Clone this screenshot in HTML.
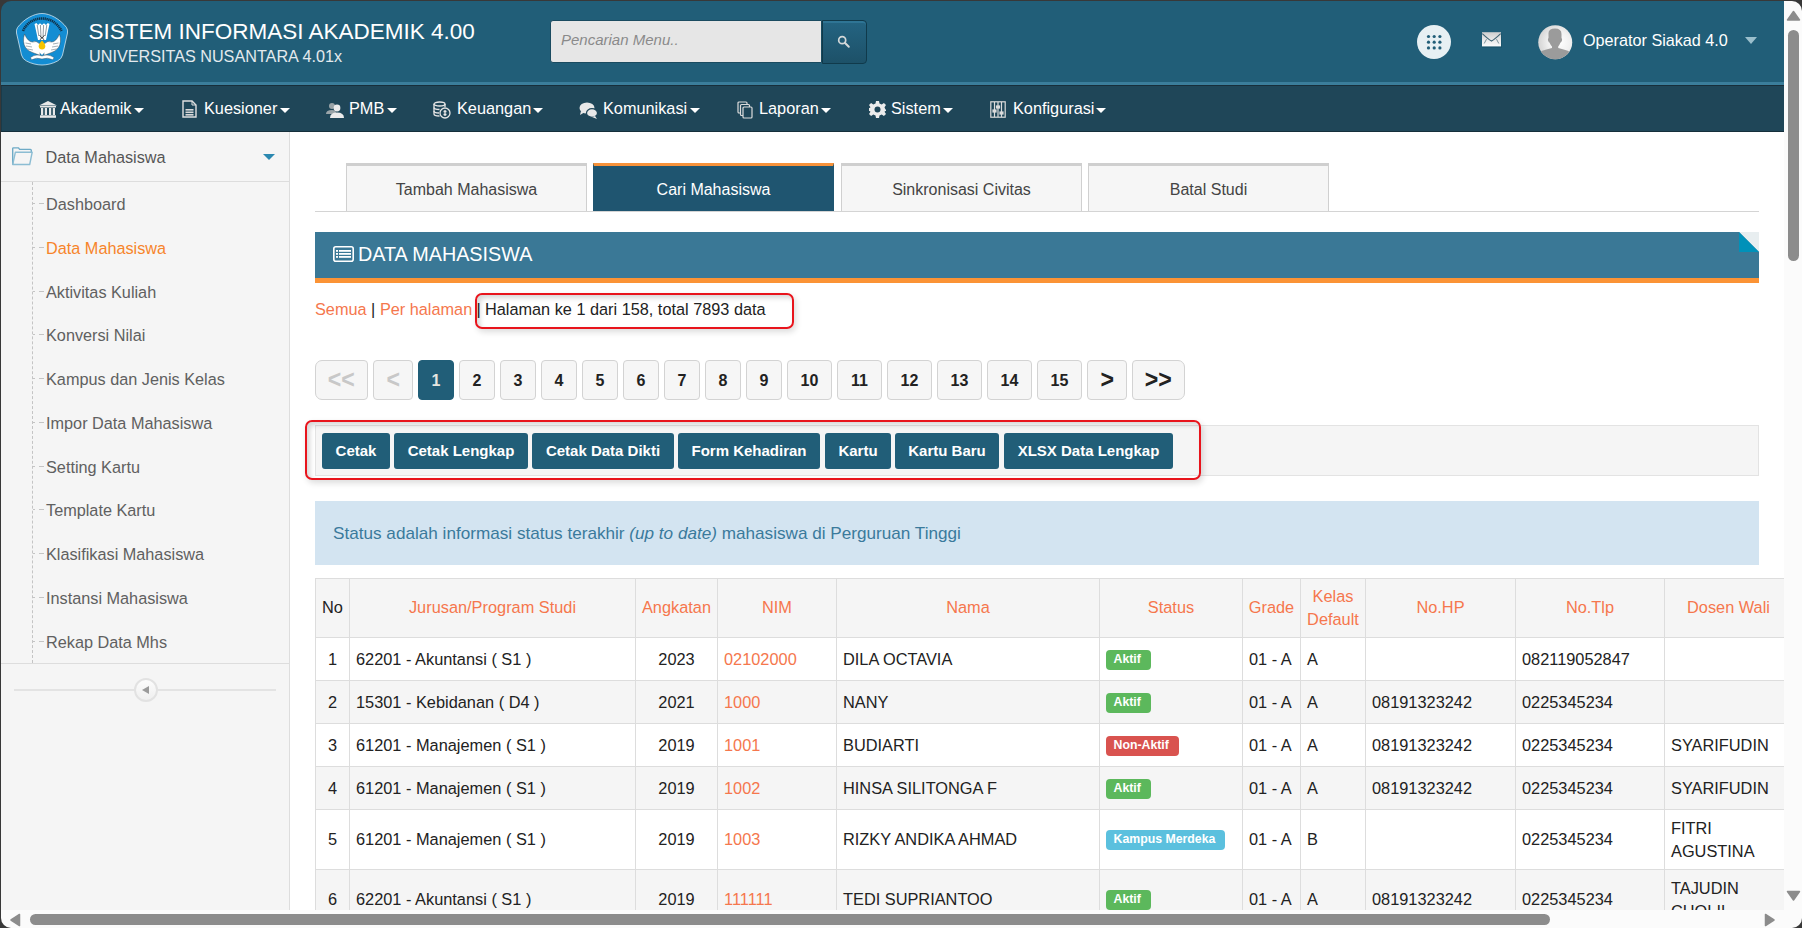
<!DOCTYPE html>
<html><head><meta charset="utf-8">
<style>
*{box-sizing:border-box;margin:0;padding:0}
html,body{width:1802px;height:928px;overflow:hidden;background:#3a3a3a;font-family:"Liberation Sans",sans-serif;}
.a{position:absolute}
#win{position:absolute;left:0;top:0;width:1802px;height:928px;background:#fff;overflow:hidden}
#hdr{position:absolute;left:0;top:0;width:1784px;height:82px;background:#215e78}
#stripe{position:absolute;left:0;top:82px;width:1784px;height:3px;background:#3b7e9b}
#nav{position:absolute;left:0;top:85px;width:1784px;height:47px;background:#1f4658;border-top:1px solid #182f3b;border-bottom:1px solid #152f3b;border-left:2px solid #1a3b4a}
.title{position:absolute;left:88.5px;top:19px;font-size:22.5px;color:#fff;white-space:nowrap;line-height:26px}
.sub{position:absolute;left:89px;top:46px;font-size:16.2px;color:#e3eaee;white-space:nowrap;line-height:20px}
.navi{position:absolute;top:99px;height:20px;font-size:16.3px;color:#fff;line-height:19px;white-space:nowrap}
.caret{position:absolute;width:0;height:0;border-left:5px solid transparent;border-right:5px solid transparent;border-top:5px solid #fff}
#side{position:absolute;left:0;top:132px;width:290px;height:796px;background:#f5f5f5;border-right:1px solid #ddd}
.sitem{position:absolute;left:46px;font-size:16.25px;color:#606060;line-height:19px;white-space:nowrap}
.sdash{position:absolute;left:32px;width:11px;height:1px;border-top:1px dashed #bbb}
.tab{position:absolute;top:163px;height:48px;background:#f6f6f6;border:1px solid #d0d0d0;border-top:3px solid #cfcfcf;border-bottom:none;font-size:16px;color:#444;text-align:center;line-height:48px}
.pg{position:absolute;top:360px;height:40px;background:#f6f6f6;border:1px solid #d3d3d3;border-radius:4px;font-size:16px;font-weight:bold;color:#222;text-align:center;line-height:40px}
.btn{position:absolute;top:433px;height:36px;background:#215e78;border-radius:3px;font-size:15px;font-weight:bold;color:#fff;text-align:center;line-height:36px;white-space:nowrap}
table{border-collapse:collapse;position:absolute;left:314px;top:577px;table-layout:fixed;font-size:16px;color:#222}
td,th{border:1px solid #ddd;padding:0 6px;line-height:23px;vertical-align:middle}
th{font-weight:normal;color:#f5774d;text-align:center;background:#f5f5f5;height:59px}
td{height:43px}
tr.s td{background:#f5f5f5}
.td{position:absolute;font-size:16.35px;line-height:23px;white-space:nowrap}
.lbl{position:absolute;font-size:12.3px;font-weight:bold;color:#fff;border-radius:4px;line-height:19px;height:20px;padding:0 10px 0 7.5px;white-space:nowrap}
.ok{background:#5cb85c}.no{background:#d9534f}.in{background:#5bc0de}
.or{color:#f5774d}
</style></head><body>
<div id="win">
  <div id="hdr"></div>
  <div id="stripe"></div>
  <div id="nav"></div>
  <!-- logo -->
  <svg class="a" style="left:0;top:0" width="80" height="80" viewBox="0 0 80 80">
    <path d="M42 13.5 C50 13.5 60 19 66.5 27.5 Q68 30 67.5 33 L62.5 55 Q61.5 59 57.5 61 C53 63.5 47 65 42 65 C37 65 31 63.5 26.5 61 Q22.5 59 21.5 55 L16.5 33 Q16 30 17.5 27.5 C24 19 34 13.5 42 13.5Z" fill="#138dd3" stroke="#cfe4f0" stroke-width="0.8"/>
    <path d="M23 31 C27 22 35 18.5 42 18.5 C49 18.5 57 22 61.5 31" fill="none" stroke="#123248" stroke-width="2.6" stroke-dasharray="1.3 0.6"/>
    <path d="M34.5 24 L36.5 23 L38 25 L40 23.2 L42 25 L44 23.2 L46 25 L47.8 23 L49.5 24 L47.5 33 L46 40 L38 40 L36.5 33Z" fill="#fff"/>
    <path d="M37.2 25 L38.8 36 M40.4 25 L41 37 M43.6 25 L43 37 M46.8 25 L45.2 36" stroke="#4a5a66" stroke-width="0.6"/>
    <path d="M39.5 35 L42 38.5 L44.5 35 M40 40 L42 37 L44 40" fill="none" stroke="#222" stroke-width="0.7"/>
    <path d="M24.5 34 Q22 42 25.5 47.5 Q29 52 35 53.5 Q38 54.5 40 55.5 L40 44 Q36 40 32.5 42 Q28 42 24.5 34Z" fill="#fff" stroke="#3b4a55" stroke-width="0.5"/>
    <path d="M59.5 34 Q62 42 58.5 47.5 Q55 52 49 53.5 Q46 54.5 44 55.5 L44 44 Q48 40 51.5 42 Q56 42 59.5 34Z" fill="#fff" stroke="#3b4a55" stroke-width="0.5"/>
    <path d="M25.5 43 L31 44 M26 46 L32 47 M27.5 49 L33 50 M58.5 43 L53 44 M58 46 L52 47 M56.5 49 L51 50" stroke="#6c7a84" stroke-width="0.6"/>
    <path d="M38 45 Q42 41 46 45 L45 52 L42 55 L39 52Z" fill="#fff"/>
    <path d="M42 40.5 Q45.5 44 45.3 46.5 Q45 49.5 42 49.5 Q39 49.5 38.7 46.5 Q38.5 44 42 40.5Z" fill="#f5c400"/>
    <path d="M30.5 57.5 Q36 53.5 42 56 Q48 53.5 54 57.5 L53 59.8 Q47.5 57 42 59 Q36.5 57 31.5 59.8Z" fill="#fff" stroke="#3b4a55" stroke-width="0.4"/>
  </svg>
  <div class="title">SISTEM INFORMASI AKADEMIK 4.00</div>
  <div class="sub">UNIVERSITAS NUSANTARA 4.01x</div>
  <!-- search -->
  <div class="a" style="left:550px;top:20px;width:272px;height:43px;background:#e6e6e6;border:1px solid #1a4b60;border-radius:3px 0 0 3px"></div>
  <div class="a" style="left:561px;top:31px;font-size:15px;font-style:italic;color:#8a8a8a;line-height:18px">Pencarian Menu..</div>
  <div class="a" style="left:822px;top:20px;width:45px;height:44px;background:linear-gradient(#246482,#1d5168);border:1px solid #103a4b;border-radius:0 4px 4px 0;box-shadow:inset 0 2px 0 rgba(70,150,185,0.35)"></div>
  <svg class="a" style="left:837px;top:35px" width="14" height="14" viewBox="0 0 14 14"><circle cx="5.2" cy="5.2" r="3.5" fill="none" stroke="#d4d8d9" stroke-width="1.7"/><path d="M7.8 7.8 L11.8 11.8" stroke="#d4d8d9" stroke-width="2" stroke-linecap="round"/></svg>
  <!-- right header -->
  <div class="a" style="left:1417px;top:25px;width:34px;height:34px;border-radius:50%;background:#e7f0f3"></div>
  <svg class="a" style="left:1417px;top:25px" width="34" height="34" viewBox="0 0 34 34" fill="#215e78">
    <circle cx="11.5" cy="11.5" r="1.6"/><circle cx="17.2" cy="11.5" r="1.6"/><circle cx="22.9" cy="11.5" r="1.6"/>
    <circle cx="11.5" cy="17.2" r="1.6"/><circle cx="17.2" cy="17.2" r="1.6"/><circle cx="22.9" cy="17.2" r="1.6"/>
    <circle cx="11.5" cy="22.9" r="1.6"/><circle cx="17.2" cy="22.9" r="1.6"/><circle cx="22.9" cy="22.9" r="1.6"/>
  </svg>
  <svg class="a" style="left:1481px;top:31px" width="22" height="18" viewBox="0 0 22 18">
    <defs><linearGradient id="mg" x1="0" y1="0" x2="0" y2="1"><stop offset="0" stop-color="#cfcfcf"/><stop offset="0.6" stop-color="#ececec"/><stop offset="1" stop-color="#fbfbfb"/></linearGradient></defs>
    <rect x="1" y="2.5" width="20" height="14.5" fill="#174d63" opacity="0.5"/>
    <rect x="1" y="1.2" width="19" height="14.2" fill="url(#mg)"/>
    <path d="M1.3 2.6 Q7 8 10.5 10 Q14 8 19.7 2.6" fill="none" stroke="#3f6373" stroke-width="1.1"/>
    <path d="M3.2 12.5 L5.5 8.2 M17.8 12.5 L15.5 8.2" fill="none" stroke="#6e8791" stroke-width="0.9"/>
  </svg>
  <svg class="a" style="left:1537.5px;top:24.5px" width="35" height="35" viewBox="0 0 35 35">
    <defs><radialGradient id="ag" cx="0.62" cy="0.5" r="0.6"><stop offset="0" stop-color="#ffffff"/><stop offset="0.55" stop-color="#f0f0f0"/><stop offset="1" stop-color="#d6d6d6"/></radialGradient>
    <clipPath id="ac"><circle cx="17.25" cy="17.25" r="17"/></clipPath></defs>
    <circle cx="17.25" cy="17.25" r="17" fill="url(#ag)"/>
    <g clip-path="url(#ac)" fill="#9b9b9b">
      <path d="M10.5 9 Q10 3.5 17 3.5 Q23.5 3.5 23.5 9 L23.5 13 Q24.5 14 23.8 16 Q23 17.5 22.5 17.5 Q21.5 20 20.2 21.5 L20.2 23 Q26 24.5 30.5 26 L36 36 L-2 36 L3.5 26 Q8 24.5 14 23 L14 21.5 Q12.5 20 11.5 17.5 Q11 17.5 10.2 16 Q9.5 14 10.5 13Z"/>
    </g>
  </svg>
  <div class="a" style="left:1583px;top:31px;font-size:16.2px;color:#fff;line-height:19px;white-space:nowrap">Operator Siakad 4.0</div>
  <div class="caret" style="left:1745px;top:37px;border-left-width:6px;border-right-width:6px;border-top:7px solid #9bbfcc"></div>


  <!-- NAV items -->
  <svg class="a" style="left:39px;top:101px" width="18" height="17" viewBox="0 0 18 17" fill="#e8e8e8">
    <path d="M9 0 L18 4.5 L0 4.5Z"/><rect x="1" y="5" width="16" height="1.5"/>
    <rect x="2" y="7" width="2.2" height="7"/><rect x="5.8" y="7" width="2.2" height="7"/><rect x="10" y="7" width="2.2" height="7"/><rect x="13.8" y="7" width="2.2" height="7"/>
    <rect x="1" y="14.3" width="16" height="2.5"/>
  </svg>
  <div class="navi" style="left:60px">Akademik</div><div class="caret" style="left:134px;top:108px"></div>
  <svg class="a" style="left:182px;top:100px" width="15" height="18" viewBox="0 0 15 18">
    <path d="M1 1 L10 1 L14 5 L14 17 L1 17Z" fill="#1f4658" stroke="#e0e0e0" stroke-width="1.4"/>
    <path d="M10 1 L10 5 L14 5" fill="none" stroke="#e0e0e0" stroke-width="1"/>
    <rect x="3.5" y="9" width="8" height="1.6" fill="#d8d8d8"/><rect x="3.5" y="11.5" width="8" height="1.6" fill="#d8d8d8"/><rect x="3.5" y="14" width="8" height="1.6" fill="#d8d8d8"/>
  </svg>
  <div class="navi" style="left:204px">Kuesioner</div><div class="caret" style="left:280px;top:108px"></div>
  <svg class="a" style="left:326px;top:102px" width="18" height="16" viewBox="0 0 18 16">
    <circle cx="6" cy="4" r="3" fill="#9aa4a8"/><path d="M0 12 Q0 8 6 8 Q10 8 10 11 L10 12Z" fill="#9aa4a8"/>
    <circle cx="11" cy="6" r="3.4" fill="#ececec"/><path d="M4 16 Q4 10.5 11 10.5 Q18 10.5 18 16Z" fill="#ececec"/>
  </svg>
  <div class="navi" style="left:349px">PMB</div><div class="caret" style="left:387px;top:108px"></div>
  <svg class="a" style="left:433px;top:101px" width="18" height="18" viewBox="0 0 18 18" fill="none" stroke="#e6e6e6" stroke-width="1.3">
    <ellipse cx="6.5" cy="3" rx="5.5" ry="2"/><path d="M1 3 L1 13 Q1 15 6.5 15 M12 3 L12 6"/><path d="M1 6.5 Q1 8.5 6.5 8.5 M1 10 Q1 12 6 12"/>
    <circle cx="12" cy="12" r="5"/><path d="M12 9 L12 15 M10.5 10.5 L13.5 10.5 M10.5 13.5 L13.5 13.5"/>
  </svg>
  <div class="navi" style="left:457px">Keuangan</div><div class="caret" style="left:533px;top:108px"></div>
  <svg class="a" style="left:579px;top:101px" width="19" height="18" viewBox="0 0 19 18">
    <ellipse cx="8" cy="7" rx="7.5" ry="5.5" fill="#e8e8e8"/><path d="M2 10 L1 14 L6 11Z" fill="#e8e8e8"/>
    <ellipse cx="13" cy="12" rx="5.5" ry="4.3" fill="#e8e8e8" stroke="#1f4658" stroke-width="1.2"/><path d="M16 15 L18 18 L13 16Z" fill="#e8e8e8"/>
  </svg>
  <div class="navi" style="left:603px">Komunikasi</div><div class="caret" style="left:690px;top:108px"></div>
  <svg class="a" style="left:737px;top:101px" width="16" height="18" viewBox="0 0 16 18" fill="#1f4658" stroke="#dcdcdc" stroke-width="1.2">
    <rect x="1" y="1" width="9" height="11" rx="1"/><rect x="3.5" y="3.5" width="9" height="11" rx="1"/><rect x="6" y="6" width="9" height="11" rx="1"/>
  </svg>
  <div class="navi" style="left:759px">Laporan</div><div class="caret" style="left:821px;top:108px"></div>
  <svg class="a" style="left:869px;top:101px" width="17" height="17" viewBox="0 0 17 17">
    <path fill="#ececec" d="M7 0 L10 0 L10.5 2.6 L12.7 3.5 L14.9 2 L17 4.1 L15.5 6.3 L16.4 8.5 L17 8.5 L17 10 L16.4 10 L15.5 10.7 L17 12.9 L14.9 15 L12.7 13.5 L10.5 14.4 L10 17 L7 17 L6.5 14.4 L4.3 13.5 L2.1 15 L0 12.9 L1.5 10.7 L0.6 10 L0 10 L0 7 L0.6 7 L1.5 6.3 L0 4.1 L2.1 2 L4.3 3.5 L6.5 2.6Z"/>
    <circle cx="8.5" cy="8.5" r="3" fill="#1f4658"/>
  </svg>
  <div class="navi" style="left:891px">Sistem</div><div class="caret" style="left:943px;top:108px"></div>
  <svg class="a" style="left:990px;top:101px" width="16" height="17" viewBox="0 0 16 17" fill="none" stroke="#dcdcdc" stroke-width="1.2">
    <rect x="0.8" y="0.8" width="14.4" height="15.4"/><path d="M4.5 1 L4.5 16 M8 1 L8 16 M11.5 1 L11.5 16"/>
    <rect x="3" y="9" width="3" height="2" fill="#dcdcdc"/><rect x="6.5" y="5" width="3" height="2" fill="#dcdcdc"/><rect x="10" y="11" width="3" height="2" fill="#dcdcdc"/>
  </svg>
  <div class="navi" style="left:1013px">Konfigurasi</div><div class="caret" style="left:1096px;top:108px"></div>

  <!-- SIDEBAR -->
  <div id="side"></div>
  <svg class="a" style="left:11px;top:146px" width="23" height="20" viewBox="0 0 23 20" fill="none" stroke="#6eaac6" stroke-width="1.4" stroke-linejoin="round">
    <path d="M1.7 18.5 L1.7 2.6 Q1.7 1.9 2.5 1.9 L7.5 1.9 L8.6 3.4 L19.4 3.4 Q20.3 3.4 20.3 4.4 L20.3 6"/>
    <path d="M1.7 18.5 L4.4 6.2 L21.2 6.2 L18.7 18.5Z" stroke="#8cbdd3"/>
  </svg>
  <div class="sitem" style="left:45.5px;top:148px;color:#555">Data Mahasiswa</div>
  <div class="caret" style="left:263px;top:154px;border-left-width:6px;border-right-width:6px;border-top:6px solid #2b88b0"></div>
  <div class="a" style="left:0;top:181px;width:289px;height:1px;background:#ddd"></div>
  <div class="a" style="left:32px;top:182px;width:0;height:481px;border-left:1px dashed #c4c4c4"></div>
  <div class="a" style="left:0;top:663px;width:289px;height:1px;background:#ddd"></div>
  <div class="a" style="left:14px;top:689px;width:262px;height:2px;background:#e3e3e3"></div>
  <div class="a" style="left:134px;top:678px;width:24px;height:24px;border-radius:50%;background:linear-gradient(#fcfcfc,#efefef);border:2px solid #e2e2e2"></div>
  <div class="a" style="left:141.5px;top:685.5px;width:0;height:0;border-top:4.75px solid transparent;border-bottom:4.75px solid transparent;border-right:7.5px solid #9a9a9a"></div>
  <div class="a" style="left:33px;top:203.20px;width:2px;height:1px;background:#c4c4c4"></div><div class="a" style="left:39px;top:203.20px;width:5px;height:1px;background:#c4c4c4"></div>
  <div class="sitem" style="top:195.20px;color:#606060">Dashboard</div>
  <div class="a" style="left:33px;top:246.95px;width:2px;height:1px;background:#c4c4c4"></div><div class="a" style="left:39px;top:246.95px;width:5px;height:1px;background:#c4c4c4"></div>
  <div class="sitem" style="top:238.95px;color:#f7842a">Data Mahasiswa</div>
  <div class="a" style="left:33px;top:290.70px;width:2px;height:1px;background:#c4c4c4"></div><div class="a" style="left:39px;top:290.70px;width:5px;height:1px;background:#c4c4c4"></div>
  <div class="sitem" style="top:282.70px;color:#606060">Aktivitas Kuliah</div>
  <div class="a" style="left:33px;top:334.45px;width:2px;height:1px;background:#c4c4c4"></div><div class="a" style="left:39px;top:334.45px;width:5px;height:1px;background:#c4c4c4"></div>
  <div class="sitem" style="top:326.45px;color:#606060">Konversi Nilai</div>
  <div class="a" style="left:33px;top:378.20px;width:2px;height:1px;background:#c4c4c4"></div><div class="a" style="left:39px;top:378.20px;width:5px;height:1px;background:#c4c4c4"></div>
  <div class="sitem" style="top:370.20px;color:#606060">Kampus dan Jenis Kelas</div>
  <div class="a" style="left:33px;top:421.95px;width:2px;height:1px;background:#c4c4c4"></div><div class="a" style="left:39px;top:421.95px;width:5px;height:1px;background:#c4c4c4"></div>
  <div class="sitem" style="top:413.95px;color:#606060">Impor Data Mahasiswa</div>
  <div class="a" style="left:33px;top:465.70px;width:2px;height:1px;background:#c4c4c4"></div><div class="a" style="left:39px;top:465.70px;width:5px;height:1px;background:#c4c4c4"></div>
  <div class="sitem" style="top:457.70px;color:#606060">Setting Kartu</div>
  <div class="a" style="left:33px;top:509.45px;width:2px;height:1px;background:#c4c4c4"></div><div class="a" style="left:39px;top:509.45px;width:5px;height:1px;background:#c4c4c4"></div>
  <div class="sitem" style="top:501.45px;color:#606060">Template Kartu</div>
  <div class="a" style="left:33px;top:553.20px;width:2px;height:1px;background:#c4c4c4"></div><div class="a" style="left:39px;top:553.20px;width:5px;height:1px;background:#c4c4c4"></div>
  <div class="sitem" style="top:545.20px;color:#606060">Klasifikasi Mahasiswa</div>
  <div class="a" style="left:33px;top:596.95px;width:2px;height:1px;background:#c4c4c4"></div><div class="a" style="left:39px;top:596.95px;width:5px;height:1px;background:#c4c4c4"></div>
  <div class="sitem" style="top:588.95px;color:#606060">Instansi Mahasiswa</div>
  <div class="a" style="left:33px;top:640.70px;width:2px;height:1px;background:#c4c4c4"></div><div class="a" style="left:39px;top:640.70px;width:5px;height:1px;background:#c4c4c4"></div>
  <div class="sitem" style="top:632.70px;color:#606060">Rekap Data Mhs</div>

  <!-- CONTENT -->
  <div class="a" style="left:315px;top:211px;width:1444px;height:1px;background:#d4d4d4"></div>
  <div class="tab" style="left:346px;width:241px">Tambah Mahasiswa</div>
  <div class="tab" style="left:593px;width:241px;background:#1f5570;border-color:#1f5570;border-top-color:#f7923a;color:#fff">Cari Mahasiswa</div>
  <div class="tab" style="left:841px;width:241px">Sinkronisasi Civitas</div>
  <div class="tab" style="left:1088px;width:241px">Batal Studi</div>
  <div class="a" style="left:315px;top:232px;width:1444px;height:46px;background:#3a7896"></div>
  <div class="a" style="left:315px;top:278px;width:1444px;height:5px;background:#fb9335"></div>
  <svg class="a" style="left:1739px;top:232px" width="20" height="20" viewBox="0 0 20 20"><path d="M0 0 L20 0 L20 20Z" fill="#e8eef0"/><path d="M0 0 L20 20 L0 20Z" fill="#0091b9"/></svg>
  <svg class="a" style="left:333px;top:246px" width="21" height="16" viewBox="0 0 21 16">
    <rect x="0.8" y="0.8" width="19.4" height="14.4" rx="2" fill="none" stroke="#fff" stroke-width="1.6"/>
    <rect x="3" y="4" width="2" height="1.8" fill="#fff"/><rect x="6" y="4" width="12" height="1.8" fill="#fff"/>
    <rect x="3" y="7" width="2" height="1.8" fill="#fff"/><rect x="6" y="7" width="12" height="1.8" fill="#fff"/>
    <rect x="3" y="10" width="2" height="1.8" fill="#fff"/><rect x="6" y="10" width="12" height="1.8" fill="#fff"/>
  </svg>
  <div class="a" style="left:358px;top:243px;font-size:19.8px;color:#fff;line-height:22px;white-space:nowrap">DATA MAHASISWA</div>

  <div class="a" style="left:315px;top:300px;font-size:16.3px;line-height:19px;white-space:nowrap;color:#222"><span class="or">Semua</span> | <span class="or">Per halaman</span></div>
  <div class="a" style="left:476.5px;top:300px;font-size:16.3px;line-height:19px;white-space:nowrap;color:#222">| <span style="position:absolute;left:8.5px">Halaman ke 1 dari 158, total 7893 data</span></div>
  <div class="a" style="left:475px;top:293px;width:319px;height:36px;border:2px solid #e8141c;border-radius:7px;box-shadow:inset 3px 3px 5px rgba(0,0,0,0.16),2px 3px 6px rgba(0,0,0,0.14)"></div>
  <div class="pg" style="left:315px;width:53px;color:#c8c8c8;font-size:21px;line-height:37px;border-radius:7px 4px 4px 7px;"><span style="display:inline-block;transform:scale(1.1,1.25);position:relative;top:-1.5px">&lt;&lt;</span></div>
  <div class="pg" style="left:373px;width:40px;color:#c8c8c8;font-size:21px;line-height:37px;"><span style="display:inline-block;transform:scale(1.1,1.25);position:relative;top:-1.5px">&lt;</span></div>
  <div class="pg" style="left:418px;width:36px;background:#215e78;border-color:#215e78;color:#e6e6e0;">1</div>
  <div class="pg" style="left:459px;width:36px;">2</div>
  <div class="pg" style="left:500px;width:36px;">3</div>
  <div class="pg" style="left:541px;width:36px;">4</div>
  <div class="pg" style="left:582px;width:36px;">5</div>
  <div class="pg" style="left:623px;width:36px;">6</div>
  <div class="pg" style="left:664px;width:36px;">7</div>
  <div class="pg" style="left:705px;width:36px;">8</div>
  <div class="pg" style="left:746px;width:36px;">9</div>
  <div class="pg" style="left:787px;width:45px;">10</div>
  <div class="pg" style="left:837px;width:45px;">11</div>
  <div class="pg" style="left:887px;width:45px;">12</div>
  <div class="pg" style="left:937px;width:45px;">13</div>
  <div class="pg" style="left:987px;width:45px;">14</div>
  <div class="pg" style="left:1037px;width:45px;">15</div>
  <div class="pg" style="left:1087px;width:40px;font-size:21px;line-height:37px;"><span style="display:inline-block;transform:scale(1.1,1.25);position:relative;top:-1.5px">&gt;</span></div>
  <div class="pg" style="left:1132px;width:53px;border-radius:4px 7px 7px 4px;font-size:21px;line-height:37px;"><span style="display:inline-block;transform:scale(1.1,1.25);position:relative;top:-1.5px">&gt;&gt;</span></div>

  <div class="a" style="left:315px;top:425px;width:1444px;height:51px;background:#f5f5f5;border:1px solid #e3e3e3"></div>
  <div class="btn" style="left:322px;width:68px">Cetak</div>
  <div class="btn" style="left:394px;width:134px">Cetak Lengkap</div>
  <div class="btn" style="left:532px;width:142px">Cetak Data Dikti</div>
  <div class="btn" style="left:678px;width:142px">Form Kehadiran</div>
  <div class="btn" style="left:825px;width:66px">Kartu</div>
  <div class="btn" style="left:895px;width:104px">Kartu Baru</div>
  <div class="btn" style="left:1004px;width:169px">XLSX Data Lengkap</div>
  <div class="a" style="left:305px;top:420px;width:896px;height:60px;border:2px solid #e8141c;border-radius:7px;box-shadow:inset 3px 3px 5px rgba(0,0,0,0.16),2px 3px 6px rgba(0,0,0,0.14)"></div>
  <div class="a" style="left:315px;top:501px;width:1444px;height:64px;background:#d3e4f1"></div>
  <div class="a" style="left:333px;top:522.5px;font-size:17.15px;color:#3a7a9c;line-height:20px;white-space:nowrap">Status adalah informasi status terakhir <i>(up to date)</i> mahasiswa di Perguruan Tinggi</div>

  <!-- TABLE -->
  <div class="a" style="left:315px;top:578px;width:1490px;height:59px;background:#f5f5f5"></div>
  <div class="a" style="left:315px;top:680px;width:1490px;height:43px;background:#f5f5f5"></div>
  <div class="a" style="left:315px;top:766px;width:1490px;height:43px;background:#f5f5f5"></div>
  <div class="a" style="left:315px;top:869px;width:1490px;height:60px;background:#f5f5f5"></div>
  <div class="a" style="left:315px;top:578px;width:1490px;height:1px;background:#ddd"></div>
  <div class="a" style="left:315px;top:637px;width:1490px;height:1px;background:#ddd"></div>
  <div class="a" style="left:315px;top:680px;width:1490px;height:1px;background:#ddd"></div>
  <div class="a" style="left:315px;top:723px;width:1490px;height:1px;background:#ddd"></div>
  <div class="a" style="left:315px;top:766px;width:1490px;height:1px;background:#ddd"></div>
  <div class="a" style="left:315px;top:809px;width:1490px;height:1px;background:#ddd"></div>
  <div class="a" style="left:315px;top:869px;width:1490px;height:1px;background:#ddd"></div>
  <div class="a" style="left:315px;top:578px;width:1px;height:360px;background:#ddd"></div>
  <div class="a" style="left:349px;top:578px;width:1px;height:360px;background:#ddd"></div>
  <div class="a" style="left:635px;top:578px;width:1px;height:360px;background:#ddd"></div>
  <div class="a" style="left:717px;top:578px;width:1px;height:360px;background:#ddd"></div>
  <div class="a" style="left:836px;top:578px;width:1px;height:360px;background:#ddd"></div>
  <div class="a" style="left:1099px;top:578px;width:1px;height:360px;background:#ddd"></div>
  <div class="a" style="left:1242px;top:578px;width:1px;height:360px;background:#ddd"></div>
  <div class="a" style="left:1300px;top:578px;width:1px;height:360px;background:#ddd"></div>
  <div class="a" style="left:1365px;top:578px;width:1px;height:360px;background:#ddd"></div>
  <div class="a" style="left:1515px;top:578px;width:1px;height:360px;background:#ddd"></div>
  <div class="a" style="left:1664px;top:578px;width:1px;height:360px;background:#ddd"></div>
  <div class="td" style="left:316px;width:33px;top:596.0px;text-align:center;color:#222">No</div>
  <div class="td" style="left:350px;width:285px;top:596.0px;text-align:center;color:#f5774d">Jurusan/Program Studi</div>
  <div class="td" style="left:636px;width:81px;top:596.0px;text-align:center;color:#f5774d">Angkatan</div>
  <div class="td" style="left:718px;width:118px;top:596.0px;text-align:center;color:#f5774d">NIM</div>
  <div class="td" style="left:837px;width:262px;top:596.0px;text-align:center;color:#f5774d">Nama</div>
  <div class="td" style="left:1100px;width:142px;top:596.0px;text-align:center;color:#f5774d">Status</div>
  <div class="td" style="left:1243px;width:57px;top:596.0px;text-align:center;color:#f5774d">Grade</div>
  <div class="td" style="left:1366px;width:149px;top:596.0px;text-align:center;color:#f5774d">No.HP</div>
  <div class="td" style="left:1516px;width:148px;top:596.0px;text-align:center;color:#f5774d">No.Tlp</div>
  <div class="td" style="left:1665px;width:127px;top:596.0px;text-align:center;color:#f5774d">Dosen Wali</div>
  <div class="td" style="left:1301px;width:64px;top:584.5px;text-align:center;color:#f5774d">Kelas<br>Default</div>
  <div class="td" style="left:316px;width:33px;top:647.5px;text-align:center;color:#222">1</div>
  <div class="td" style="left:356px;top:647.5px;color:#222">62201 - Akuntansi ( S1 )</div>
  <div class="td" style="left:636px;width:81px;top:647.5px;text-align:center;color:#222">2023</div>
  <div class="td" style="left:724px;top:647.5px;color:#f5774d">02102000</div>
  <div class="td" style="left:843px;top:647.5px;color:#222">DILA OCTAVIA</div>
  <div class="lbl ok" style="left:1106px;top:649.5px">Aktif</div>
  <div class="td" style="left:1249px;top:647.5px;color:#222">01 - A</div>
  <div class="td" style="left:1307px;top:647.5px;color:#222">A</div>
  <div class="td" style="left:1372px;top:647.5px;color:#222"></div>
  <div class="td" style="left:1522px;top:647.5px;color:#222">082119052847</div>
  <div class="td" style="left:316px;width:33px;top:690.5px;text-align:center;color:#222">2</div>
  <div class="td" style="left:356px;top:690.5px;color:#222">15301 - Kebidanan ( D4 )</div>
  <div class="td" style="left:636px;width:81px;top:690.5px;text-align:center;color:#222">2021</div>
  <div class="td" style="left:724px;top:690.5px;color:#f5774d">1000</div>
  <div class="td" style="left:843px;top:690.5px;color:#222">NANY</div>
  <div class="lbl ok" style="left:1106px;top:692.5px">Aktif</div>
  <div class="td" style="left:1249px;top:690.5px;color:#222">01 - A</div>
  <div class="td" style="left:1307px;top:690.5px;color:#222">A</div>
  <div class="td" style="left:1372px;top:690.5px;color:#222">08191323242</div>
  <div class="td" style="left:1522px;top:690.5px;color:#222">0225345234</div>
  <div class="td" style="left:316px;width:33px;top:733.5px;text-align:center;color:#222">3</div>
  <div class="td" style="left:356px;top:733.5px;color:#222">61201 - Manajemen ( S1 )</div>
  <div class="td" style="left:636px;width:81px;top:733.5px;text-align:center;color:#222">2019</div>
  <div class="td" style="left:724px;top:733.5px;color:#f5774d">1001</div>
  <div class="td" style="left:843px;top:733.5px;color:#222">BUDIARTI</div>
  <div class="lbl no" style="left:1106px;top:735.5px">Non-Aktif</div>
  <div class="td" style="left:1249px;top:733.5px;color:#222">01 - A</div>
  <div class="td" style="left:1307px;top:733.5px;color:#222">A</div>
  <div class="td" style="left:1372px;top:733.5px;color:#222">08191323242</div>
  <div class="td" style="left:1522px;top:733.5px;color:#222">0225345234</div>
  <div class="td" style="left:1671px;top:733.5px;color:#222">SYARIFUDIN</div>
  <div class="td" style="left:316px;width:33px;top:776.5px;text-align:center;color:#222">4</div>
  <div class="td" style="left:356px;top:776.5px;color:#222">61201 - Manajemen ( S1 )</div>
  <div class="td" style="left:636px;width:81px;top:776.5px;text-align:center;color:#222">2019</div>
  <div class="td" style="left:724px;top:776.5px;color:#f5774d">1002</div>
  <div class="td" style="left:843px;top:776.5px;color:#222">HINSA SILITONGA F</div>
  <div class="lbl ok" style="left:1106px;top:778.5px">Aktif</div>
  <div class="td" style="left:1249px;top:776.5px;color:#222">01 - A</div>
  <div class="td" style="left:1307px;top:776.5px;color:#222">A</div>
  <div class="td" style="left:1372px;top:776.5px;color:#222">08191323242</div>
  <div class="td" style="left:1522px;top:776.5px;color:#222">0225345234</div>
  <div class="td" style="left:1671px;top:776.5px;color:#222">SYARIFUDIN</div>
  <div class="td" style="left:316px;width:33px;top:828.0px;text-align:center;color:#222">5</div>
  <div class="td" style="left:356px;top:828.0px;color:#222">61201 - Manajemen ( S1 )</div>
  <div class="td" style="left:636px;width:81px;top:828.0px;text-align:center;color:#222">2019</div>
  <div class="td" style="left:724px;top:828.0px;color:#f5774d">1003</div>
  <div class="td" style="left:843px;top:828.0px;color:#222">RIZKY ANDIKA AHMAD</div>
  <div class="lbl in" style="left:1106px;top:830.0px">Kampus Merdeka</div>
  <div class="td" style="left:1249px;top:828.0px;color:#222">01 - A</div>
  <div class="td" style="left:1307px;top:828.0px;color:#222">B</div>
  <div class="td" style="left:1372px;top:828.0px;color:#222"></div>
  <div class="td" style="left:1522px;top:828.0px;color:#222">0225345234</div>
  <div class="td" style="left:1671px;top:816.5px;color:#222">FITRI<br>AGUSTINA</div>
  <div class="td" style="left:316px;width:33px;top:888.0px;text-align:center;color:#222">6</div>
  <div class="td" style="left:356px;top:888.0px;color:#222">62201 - Akuntansi ( S1 )</div>
  <div class="td" style="left:636px;width:81px;top:888.0px;text-align:center;color:#222">2019</div>
  <div class="td" style="left:724px;top:888.0px;color:#f5774d">111111</div>
  <div class="td" style="left:843px;top:888.0px;color:#222">TEDI SUPRIANTOO</div>
  <div class="lbl ok" style="left:1106px;top:890.0px">Aktif</div>
  <div class="td" style="left:1249px;top:888.0px;color:#222">01 - A</div>
  <div class="td" style="left:1307px;top:888.0px;color:#222">A</div>
  <div class="td" style="left:1372px;top:888.0px;color:#222">08191323242</div>
  <div class="td" style="left:1522px;top:888.0px;color:#222">0225345234</div>
  <div class="td" style="left:1671px;top:876.5px;color:#222">TAJUDIN<br>CHOLIL</div>

  <!-- SCROLLBARS -->
  <div class="a" style="left:1784px;top:0;width:18px;height:928px;background:#fbfbfb"></div>
  <div class="a" style="left:0;top:910px;width:1802px;height:18px;background:#fbfbfb"></div>
  <svg class="a" style="left:1784px;top:0" width="18" height="928" viewBox="0 0 18 928" fill="#8c8c8c">
    <path d="M3.5 20 L9.5 11.5 L15.5 20Z" stroke="#8c8c8c" stroke-width="1.5" stroke-linejoin="round"/>
    <rect x="4" y="30" width="11" height="231" rx="5.5"/>
    <path d="M3.5 891.5 L9.5 900 L15.5 891.5Z" stroke="#8c8c8c" stroke-width="1.5" stroke-linejoin="round"/>
  </svg>
  <svg class="a" style="left:0;top:910px" width="1802" height="18" viewBox="0 0 1802 18" fill="#8c8c8c">
    <path d="M19.5 4.5 L11 10 L19.5 15.5Z" stroke="#8c8c8c" stroke-width="1.5" stroke-linejoin="round"/>
    <rect x="30" y="4" width="1520" height="11" rx="5.5"/>
    <path d="M1765.5 4.5 L1774 10 L1765.5 15.5Z" stroke="#8c8c8c" stroke-width="1.5" stroke-linejoin="round"/>
  </svg>
  <!-- FRAME -->
  <svg class="a" style="left:0;top:0" width="1802" height="928" viewBox="0 0 1802 928">
    <path fill="#383838" fill-rule="evenodd" d="M0 0 H1802 V928 H0Z M1 11 A10 10 0 0 1 11 1 H1792 A10 10 0 0 1 1802 11 V918 A10 10 0 0 1 1792 928 H11 A10 10 0 0 1 1 918Z"/>
  </svg>
</div>
</body></html>
